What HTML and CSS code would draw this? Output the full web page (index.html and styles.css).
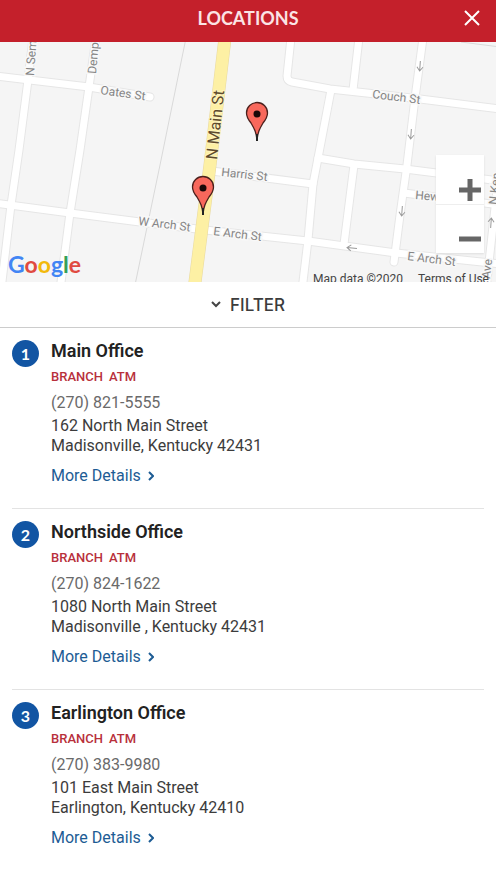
FILE: index.html
```html
<!DOCTYPE html>
<html lang="en">
<head>
<meta charset="utf-8">
<meta name="viewport" content="width=device-width, initial-scale=1">
<title>Locations</title>
<link rel="stylesheet" href="styles.css">
</head>
<body>
<header class="topbar">
  <h1 class="topbar-title">LOCATIONS</h1>
  <button class="close" type="button" aria-label="Close">
    <svg width="18" height="18" viewBox="0 0 18 18"><path d="M2 2 16 16M16 2 2 16"/></svg>
  </button>
</header>
<main>
  <section class="map" aria-label="Map">
    <svg class="map-canvas" viewBox="0 42 496 240" preserveAspectRatio="xMidYMid slice">
      <defs>
        <g id="roads">
          <path d="M33 38 28 80 19 150 11 205 1 290"/>
          <path d="M96 38 89 87 80 150 70 213 60 290"/>
          <path d="M-5 76 89 87 150 97"/>
          <path d="M-5 203 70 213 140 222 205 230 308 241 396 253 500 264"/>
          <path d="M291 38 287 76Q287 81 292 82L330 89 385 95 420 99 500 109"/>
          <path d="M359 38 353 90"/>
          <path d="M423 38 415 98 407 165 400 215 394 262"/>
          <path d="M331 90 318 158 313 184 308 240 302 290"/>
          <path d="M318 158 354 164 405 169 500 181"/>
          <path d="M354 165 344 244"/>
          <path d="M212 171 313 184"/>
          <path d="M404 193 500 205"/>
          <path d="M498 180 486 290"/>
        </g>
        <g id="pin">
          <path d="M0 0C-.8-8-2.500-11-6-17-8.500-20-10.500-23-10.500-27A10.500 10.500 0 0 1 10.500-27C10.500-23 8.500-20 6-17 2.500-11 .8-8 0 0Z" fill="#f8685c" stroke="#4b201d" stroke-width="1.300"/>
          <path d="M0-6V1" stroke="#222" stroke-width="2"/>
          <circle cy="-26" r="3.500" fill="#180808"/>
        </g>
        <path id="arrow" d="M0-5V5M-3 1 0 5 3 1"/>
      </defs>
      <rect y="42" width="496" height="240" fill="#f5f5f5"/>
      <path class="boundary" d="M186 38 160 165 135 285M461 42 500 47"/>
      <use href="#roads" class="road-edge"/>
      <use href="#roads" class="road"/>
      <path class="main-edge" d="M225 38 210 165 194 290"/>
      <path class="main-road" d="M225 38 210 165 194 290"/>
      <g class="arrows">
        <use href="#arrow" transform="translate(420 66) rotate(4)"/>
        <use href="#arrow" transform="translate(411 134) rotate(4)"/>
        <use href="#arrow" transform="translate(402 211) rotate(4)"/>
        <use href="#arrow" transform="translate(352 248) rotate(96)"/>
        <use href="#arrow" transform="translate(491 223) rotate(184)"/>
      </g>
      <g class="street">
        <text transform="translate(34 76) rotate(-86)">N Sem</text>
        <text transform="translate(96 74) rotate(-85)">Demp</text>
        <text transform="translate(100 94) rotate(8)">Oates St</text>
        <text transform="translate(372 98) rotate(7)">Couch St</text>
        <text transform="translate(221 176) rotate(6)">Harris St</text>
        <text transform="translate(138 225) rotate(7)">W Arch St</text>
        <text transform="translate(213 235) rotate(7)">E Arch St</text>
        <text transform="translate(407 260) rotate(7)">E Arch St</text>
        <text transform="translate(415 199) rotate(5)">Hew</text>
        <text transform="translate(497 205) rotate(-84)">N Ken</text>
        <text transform="translate(490 279) rotate(-84)">Ave</text>
      </g>
      <text class="main-street" transform="translate(217 160) rotate(-84)">N Main St</text>
      <use href="#pin" x="257" y="140"/>
      <use href="#pin" x="203" y="214"/>
    </svg>
    <div class="brand" aria-label="Google"><span class="blue">G</span><span class="red">o</span><span class="yellow">o</span><span class="blue">g</span><span class="green">l</span><span class="red">e</span></div>
    <div class="zoom">
      <button type="button" aria-label="Zoom in"><svg width="22" height="22" viewBox="0 0 22 22"><path d="M0 11H22M11 0V22"/></svg></button>
      <button type="button" aria-label="Zoom out"><svg width="22" height="22" viewBox="0 0 22 22"><path d="M0 11H22"/></svg></button>
    </div>
    <div class="credits"><span>Map data ©2020</span><a href="#terms">Terms of Use</a></div>
  </section>
  <button class="filter" type="button">
    <svg width="10" height="8" viewBox="0 0 10 8"><path d="M1 1 5 5 9 1"/></svg>
    FILTER
  </button>
  <ol class="list">
    <li class="item">
      <span class="num">1</span>
      <div class="info">
        <h2>Main Office</h2>
        <div class="tags"><span>BRANCH</span><span>ATM</span></div>
        <a class="phone" href="tel:2708215555">(270) 821-5555</a>
        <address>162 North Main Street<br>Madisonville, Kentucky 42431</address>
        <a class="more" href="#main">More Details <svg width="6" height="10" viewBox="0 0 6 10"><path d="M1 1 5 5 1 9"/></svg></a>
      </div>
    </li>
    <li class="item">
      <span class="num">2</span>
      <div class="info">
        <h2>Northside Office</h2>
        <div class="tags"><span>BRANCH</span><span>ATM</span></div>
        <a class="phone" href="tel:2708241622">(270) 824-1622</a>
        <address>1080 North Main Street<br>Madisonville , Kentucky 42431</address>
        <a class="more" href="#northside">More Details <svg width="6" height="10" viewBox="0 0 6 10"><path d="M1 1 5 5 1 9"/></svg></a>
      </div>
    </li>
    <li class="item">
      <span class="num">3</span>
      <div class="info">
        <h2>Earlington Office</h2>
        <div class="tags"><span>BRANCH</span><span>ATM</span></div>
        <a class="phone" href="tel:2703839980">(270) 383-9980</a>
        <address>101 East Main Street<br>Earlington, Kentucky 42410</address>
        <a class="more" href="#earlington">More Details <svg width="6" height="10" viewBox="0 0 6 10"><path d="M1 1 5 5 1 9"/></svg></a>
      </div>
    </li>
  </ol>
</main>
</body>
</html>
```
FILE: styles.css
```css
* { box-sizing: border-box; }
body {
  margin: 0;
  background: #fff;
  color: #3c3c3c;
  font-family: Roboto, "Liberation Sans", sans-serif;
  font-size: 16px;
}
button {
  border: 0;
  padding: 0;
  background: none;
  color: inherit;
  font: inherit;
}
a { color: inherit; text-decoration: none; }
svg { display: block; fill: none; }

.topbar {
  display: grid;
  grid-template-columns: 48px 1fr 48px;
  align-items: center;
  height: 42px;
  padding-bottom: 6px;
  background: #c4202b;
  color: #fbe4e5;
}
.topbar-title {
  grid-column: 2;
  margin: 0;
  text-align: center;
  font: 700 18px/20px Lato, sans-serif;
}
.close { display: grid; place-items: center; height: 36px; }
.close svg { stroke: #fff; stroke-width: 2; }

.map { position: relative; height: 240px; overflow: hidden; }
.map-canvas { width: 100%; height: 100%; }
.boundary { stroke: #d9d9d9; stroke-width: 1; }
.road-edge { stroke: #e6e6e6; stroke-width: 9; stroke-linecap: round; }
.road { stroke: #fff; stroke-width: 7; stroke-linecap: round; }
.main-edge { stroke: #e8d9a0; stroke-width: 13; }
.main-road { stroke: #fdf0a4; stroke-width: 12; }
.arrows { stroke: #999; stroke-width: 1; }
.street {
  fill: #858585;
  stroke: #f8f8f8;
  stroke-width: 3;
  paint-order: stroke;
  font-size: 12px;
}
.main-street {
  fill: #5d4a2c;
  stroke: #fdf3bd;
  stroke-width: 2;
  paint-order: stroke;
  font-size: 16px;
}
.brand {
  position: absolute;
  left: 8px;
  bottom: 4px;
  font: 700 23px/28px Lato, sans-serif;
}
.blue { color: #4285f4; }
.red { color: #e04a41; }
.yellow { color: #f2b90c; }
.green { color: #34a058; }
.zoom {
  position: absolute;
  right: 12px;
  bottom: 29px;
  width: 48px;
  background: #fff;
  box-shadow: 0 1px 2px #ddd;
}
.zoom button {
  display: flex;
  align-items: flex-end;
  justify-content: flex-end;
  width: 100%;
  height: 49px;
  padding: 0 3px 3px 0;
}
.zoom button + button { border-top: 1px solid #eee; }
.zoom svg { stroke: #666; stroke-width: 5; }
.credits {
  position: absolute;
  right: 7px;
  bottom: -5px;
  display: flex;
  gap: 15px;
  color: #444;
  font-size: 12px;
  line-height: 16px;
}

.filter {
  display: flex;
  align-items: center;
  justify-content: center;
  gap: 9px;
  width: 100%;
  height: 46px;
  border-bottom: 1px solid #ccc;
  font: 500 17px/20px Inter, sans-serif;
}
.filter svg { stroke: #444; stroke-width: 2; }

.list { margin: 0; padding: 0 12px; list-style: none; }
.item {
  display: flex;
  gap: 12px;
  height: 181px;
  padding-top: 12px;
  border-bottom: 1px solid #e3e3e3;
}
.num {
  flex: none;
  width: 27px;
  height: 27px;
  border-radius: 50%;
  background: #1255a3;
  color: #fff;
  text-align: center;
  font: 700 16px/27px Lato, sans-serif;
}
h2 {
  margin: 0;
  color: #222;
  font-size: 18px;
  font-weight: 600;
  line-height: 22px;
}
.tags {
  display: flex;
  gap: 6px;
  margin-top: 6px;
  color: #b8303b;
  font-size: 13px;
  font-weight: 500;
  line-height: 18px;
}
.phone { display: block; margin-top: 7px; color: #6a6a6a; font-size: 16px; line-height: 20px; }
address { font-size: 16px; font-style: normal; line-height: 20px; margin-top: 3px; }
.more {
  display: flex;
  align-items: center;
  gap: 7px;
  margin-top: 10px;
  color: #1d5c94;
  font-size: 16px;
  line-height: 20px;
}
.more svg { stroke: #1d5c94; stroke-width: 2; }
```
